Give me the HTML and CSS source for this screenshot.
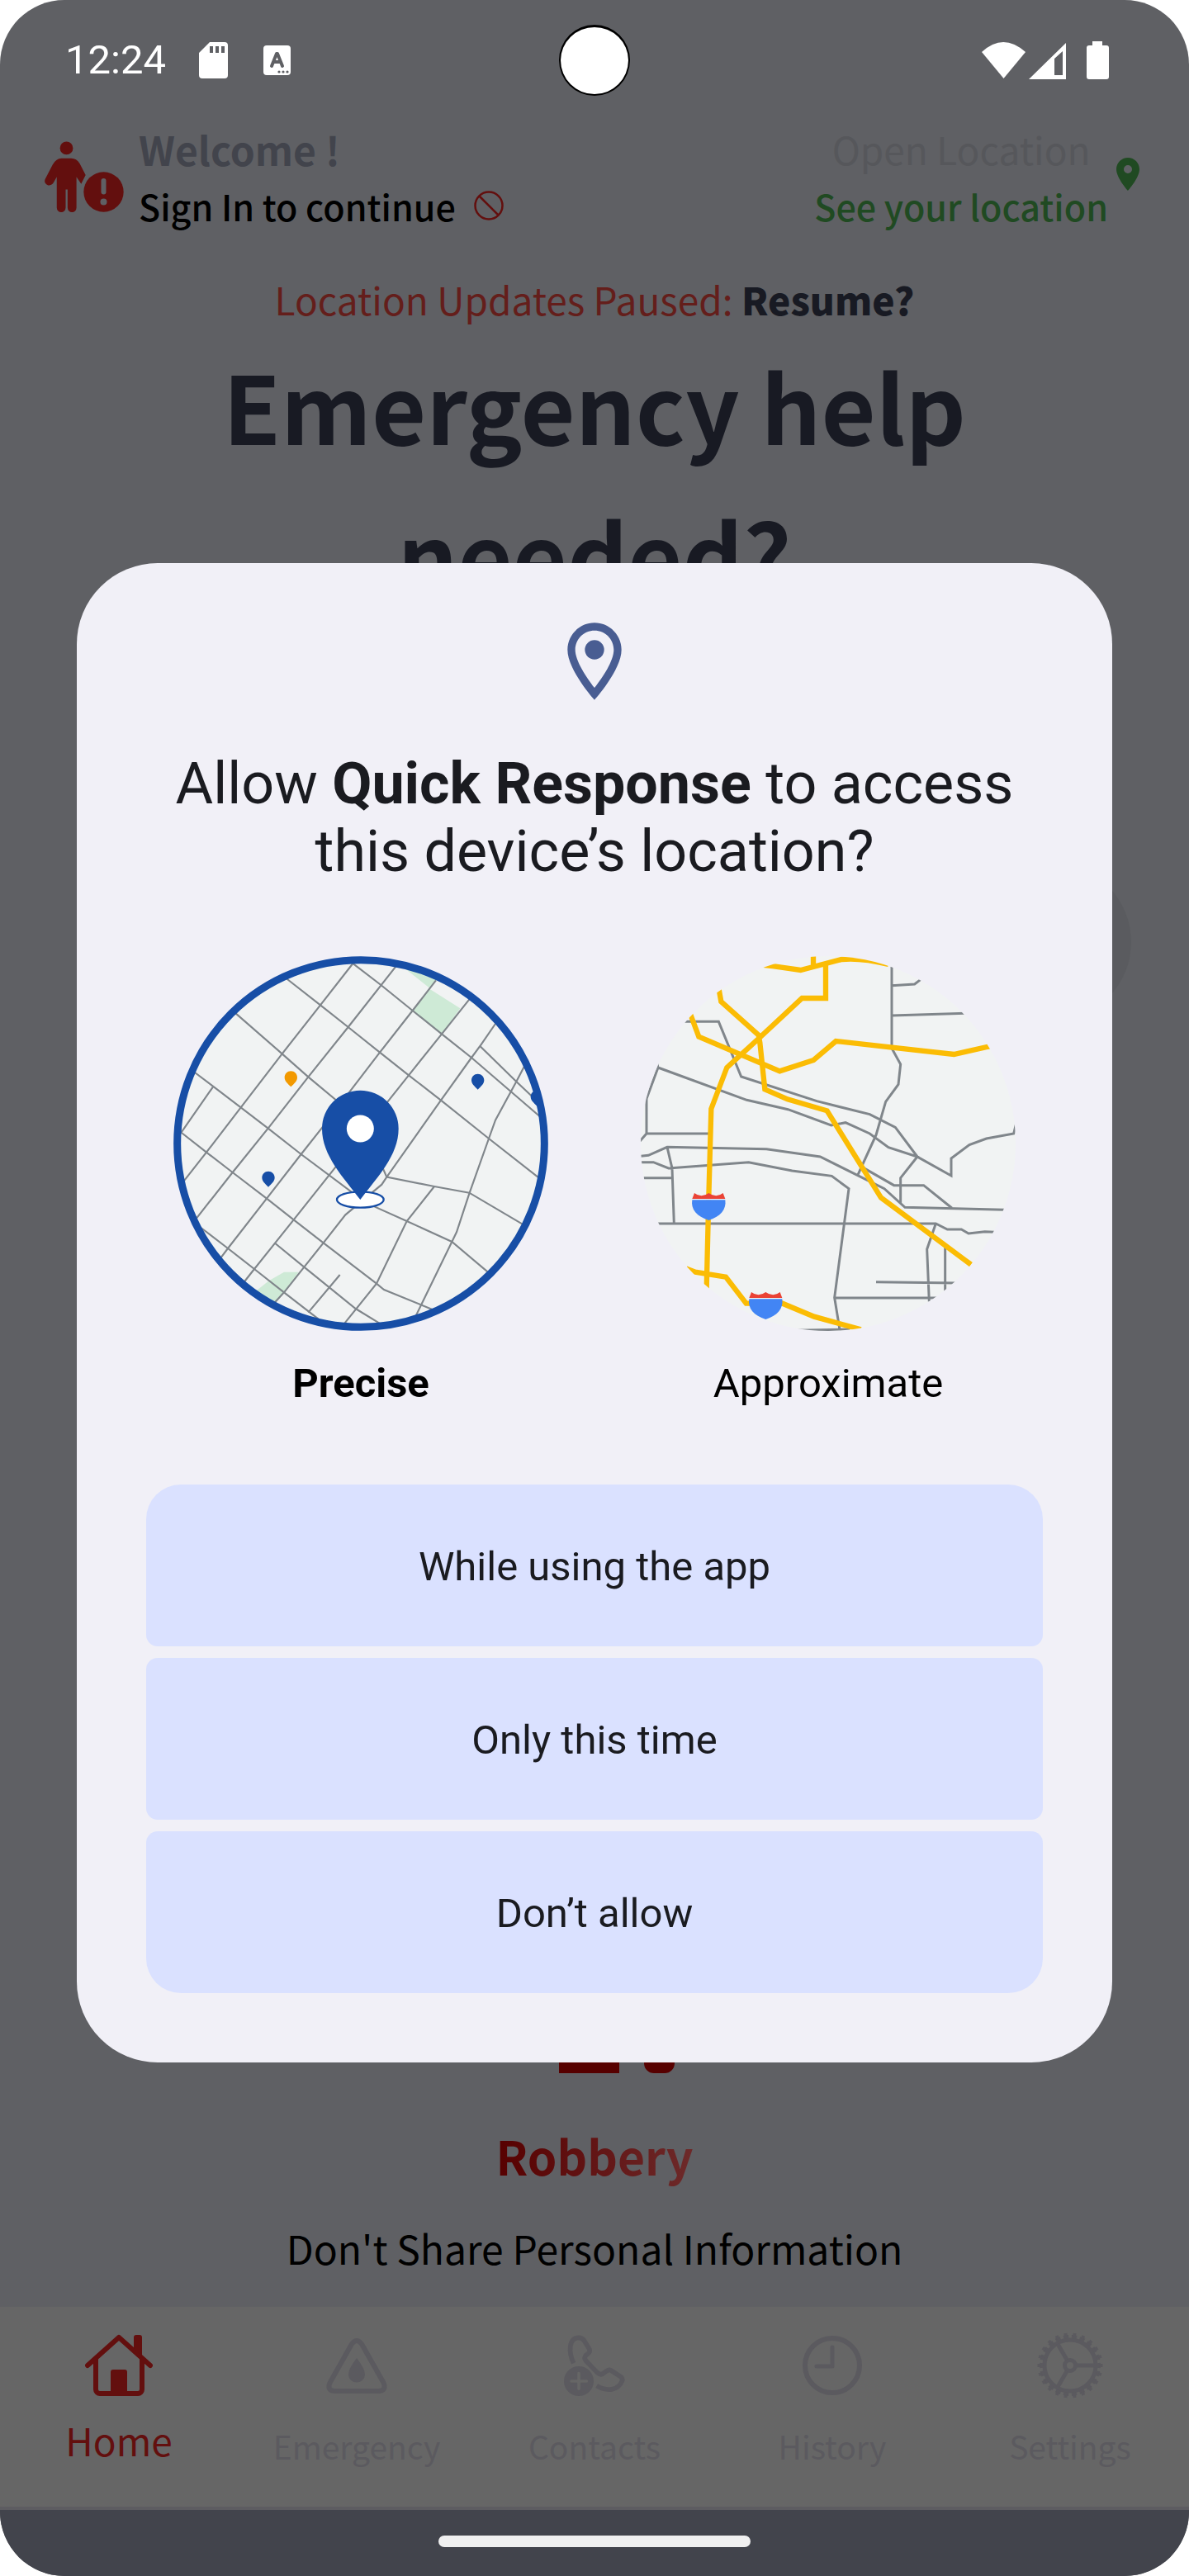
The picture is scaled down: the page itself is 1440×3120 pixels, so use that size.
FILE: index.html
```html
<!DOCTYPE html>
<html lang="en">
<head>
<meta charset="utf-8">
<meta name="viewport" content="width=device-width, initial-scale=1">
<title>Quick Response</title>
<link rel="stylesheet" href="styles.css">
</head>
<body>
<div class="screen">
  <div class="status-bar">
    <div class="status-left">
      <time class="clock">12:24</time>
      <svg class="sd-icon" viewBox="0 0 35 44" aria-hidden="true"><path fill="#fff" fill-rule="evenodd" d="M13 0H31a4 4 0 0 1 4 4V40a4 4 0 0 1-4 4H4a4 4 0 0 1-4-4V13ZM13 5V13H17V5ZM20 5V13H24V5ZM27 5V13H31V5Z"/></svg>
      <svg class="keyboard-icon" viewBox="0 0 33 36" aria-hidden="true"><rect width="33" height="36" rx="4" fill="#fff"/><path d="M10 25 16 10h1L23 25M12 20h9" fill="none" stroke="#5f6064" stroke-width="4" stroke-linecap="round" stroke-linejoin="round"/><g fill="#5f6064"><circle cx="19" cy="32" r="1.6"/><circle cx="24" cy="32" r="1.6"/><circle cx="29" cy="32" r="1.6"/></g></svg>
    </div>
    <div class="camera"></div>
    <svg class="status-icons" viewBox="0 0 154 46" aria-hidden="true"><g fill="#fff"><path d="M0 13Q26-11 53 13L26.500 45Z"/><path fill-rule="evenodd" d="M102 2V46H57ZM88 21V41H98V12Z"/><path d="M134 0h12v5h5a3 3 0 0 1 3 3V43a3 3 0 0 1-3 3H130a3 3 0 0 1-3-3V8a3 3 0 0 1 3-3h4Z"/></g></svg>
  </div>

  <header class="app-header">
    <div class="account">
      <svg class="person-icon" viewBox="42 36 286 256" aria-hidden="true"><g fill="#630f0e"><circle cx="121" cy="61" r="23.500"/><path d="M103 98H138Q157 98 169 117L190 158 174 190 157 165V276a16 16 0 0 1-32 0V210H118V276a16 16 0 0 1-32 0V165L75 184Q68 196 55 195 38 189 44 173L71 121Q84 98 103 98Z"/><circle cx="255" cy="219" r="72"/></g><path d="M255 179V219" stroke="#5f6064" stroke-width="18" stroke-linecap="round"/><circle cx="255" cy="255" r="12" fill="#5f6064"/></svg>
      <div>
        <p class="welcome">Welcome !</p>
        <a class="sign-in" href="#sign-in">Sign In to continue
          <svg class="ban-icon" viewBox="0 0 36 36" aria-hidden="true"><g fill="none" stroke="#630f0e" stroke-width="2.500"><circle cx="18" cy="18" r="16.500"/><path d="M6 6 30 30"/></g></svg>
        </a>
      </div>
    </div>
    <a class="location-link" href="#location">
      <span class="location-text"><span class="location-hint">Open Location</span><span class="location-action">See your location</span></span>
      <svg class="pin-icon" viewBox="5 2 14 20" aria-hidden="true"><path fill="#204a22" d="M12 2C8.130 2 5 5.130 5 9c0 5.250 7 13 7 13s7-7.750 7-13c0-3.870-3.130-7-7-7zm0 9.500a2.500 2.500 0 1 1 0-5 2.500 2.500 0 0 1 0 5z"/></svg>
    </a>
  </header>

  <main class="home">
    <p class="paused">Location Updates Paused: <a class="resume" href="#resume">Resume?</a></p>
    <h1 class="headline">Emergency help needed?</h1>
    <div class="bubble"></div>
    <section class="tip">
      <svg class="tip-icon" viewBox="0 0 140 100" aria-hidden="true"><path fill="#570000" d="M0 0H73V100H0ZM103 0H140V88a12 12 0 0 1-12 12H115a12 12 0 0 1-12-12Z"/></svg>
      <h2 class="tip-title">Robbery</h2>
      <p class="tip-text">Don't Share Personal Information</p>
    </section>
  </main>

  <nav class="tabs">
    <a class="tab tab-active" href="#home">
      <svg class="tab-icon" viewBox="0 0 82 80" aria-hidden="true"><g fill="none" stroke="#630f0e" stroke-width="6" stroke-linecap="round" stroke-linejoin="round"><path d="M3 40 41 6 79 40"/><path d="M13 33V69a5 5 0 0 0 5 5H64a5 5 0 0 0 5-5V33"/></g><path fill="#630f0e" d="M31 74V48a3 3 0 0 1 3-3H48a3 3 0 0 1 3 3V74ZM59 19V6a3 3 0 0 1 3-3h4a3 3 0 0 1 3 3V28Z"/></svg>
      Home
    </a>
    <a class="tab" href="#emergency">
      <svg class="tab-icon" viewBox="0 0 80 80" aria-hidden="true"><path d="M34 14Q40 6 46 14L72 60Q77 70 67 71H13Q3 70 8 60Z" fill="none" stroke="#5b5a5f" stroke-width="6" stroke-linejoin="round"/><path fill="#5b5a5f" d="M40 31Q50 44 50 51a10 9.500 0 0 1-20 0Q30 44 40 31Z"/></svg>
      Emergency
    </a>
    <a class="tab" href="#contacts">
      <svg class="tab-icon" viewBox="60 46 240 240" aria-hidden="true"><g fill="none" stroke="#5b5a5f" stroke-width="17" stroke-linejoin="round"><path d="M104 158C85 118 86 66 122 65Q137 65 144 78L161 106Q165 113 160 120L148 130Q141 138 148 148L190 192Q204 204 214 193L224 186Q232 180 240 184L274 206Q284 214 280 223C266 257 225 262 188 240"/></g><circle cx="123" cy="223" r="54" fill="#5b5a5f"/><path d="M123 195V251M96 223H151" stroke="#666" stroke-width="11" stroke-linecap="round"/></svg>
      Contacts
    </a>
    <a class="tab" href="#history">
      <svg class="tab-icon" viewBox="0 0 80 80" aria-hidden="true"><g fill="none" stroke="#5b5a5f" stroke-linecap="round" stroke-linejoin="round"><circle cx="40" cy="40" r="33" stroke-width="6"/><path d="M40 18V41H21" stroke-width="5"/></g></svg>
      History
    </a>
    <a class="tab" href="#settings">
      <svg class="tab-icon" viewBox="0 0 80 80" aria-hidden="true"><g fill="none" stroke="#5b5a5f"><circle cx="40" cy="40" r="31" stroke-width="5"/><circle cx="40" cy="40" r="35" stroke-width="4" pathLength="22" stroke-dasharray=".62 .38" stroke-dashoffset=".31"/><circle cx="40" cy="40" r="37.500" stroke-width="4" pathLength="22" stroke-dasharray=".36 .64" stroke-dashoffset=".18"/><circle cx="40" cy="40" r="6.500" stroke-width="5"/><path d="M48 40H70M36 33 25 14M36 47 25 66" stroke-width="5"/></g></svg>
      Settings
    </a>
  </nav>
  <div class="gesture-bar"><div class="gesture-handle"></div></div>

  <div class="overlay">
    <section class="dialog" role="dialog" aria-modal="true" aria-labelledby="dialog-title">
      <svg class="dialog-icon" viewBox="0 0 24 24" aria-hidden="true"><path fill="#495d92" d="M12 2C8.130 2 5 5.130 5 9c0 5.250 7 13 7 13s7-7.750 7-13c0-3.870-3.130-7-7-7zM7 9c0-2.760 2.240-5 5-5s5 2.240 5 5c0 2.880-2.880 7.190-5 9.880C9.920 16.210 7 11.850 7 9z"/><circle cx="12" cy="9" r="2.500" fill="#495d92"/></svg>
      <h2 class="dialog-title" id="dialog-title">Allow <b>Quick Response</b> to access this device’s location?</h2>
      <div class="accuracy">
        <label class="accuracy-option">
          <input class="accuracy-input" type="radio" name="accuracy" value="precise" checked>
          <svg class="map" viewBox="58 55 1362 1362" aria-hidden="true">
            <defs><clipPath id="disc-a"><circle cx="739" cy="736" r="675"/></clipPath></defs>
            <g clip-path="url(#disc-a)">
              <rect x="58" y="55" width="1362" height="1362" fill="#f1f3f3"/>
              <path fill="#ceead6" d="M880 85 990 172 1020 132 900 60ZM990 175 1100 245 1033 338 927 253ZM350 1278 405 1235 460 1203H513L427 1320Z"/>
              <g fill="none" stroke="#80868b" stroke-width="6.500">
                <path d="M710 82 592 233 453 410 303 605 178 768 98 870M866 93 693 313 548 494 402 681 273 841 140 1010M1012 143 927 253 808 405 597 680 522 775 397 936 256 1117 228 1154M1135 210 1033 338 913 488 647 822 495 1013 352 1192 312 1243M1230 298 1172 382 1141 424 1030 579 833 858 815 885 683 995 603 1097 533 1185 460 1277 425 1315M1335 452 1304 511 1228 651 1204 718 1133 918 1087 1058 1070 1093 936 1368M202 530 85 698M1006 892 906 1018 796 1245 676 1394M663 1213 548 1350"/>
                <path d="M705 78 812 160 927 253 1033 338 1141 424 1392 640M468 136 592 233 693 313 808 405 913 488 1030 579 1204 718 1390 864M281 260 453 410 548 494 680 604M132 475 303 605 402 681 522 775 705 912 790 966 906 1018 1070 1093 1204 1206M84 694 178 768 273 841 397 936 495 1013 603 1097 796 1245 823 1267 1006 1342M154 1039 256 1117 352 1192 460 1277 585 1374M428 1099 533 1185 720 1336 810 1391M1172 382 1304 511 1370 573M810 805 833 858 1006 892 1133 915 1330 1031"/>
              </g>
              <g fill="#174ea6"><path id="drop" d="M1164 483c-13 0-23 10-23 23 0 14 12 23 23 34 11-11 23-20 23-34 0-13-10-23-23-23Z"/><use href="#drop" x="-761" y="354"/><use href="#drop" x="215" y="60"/></g>
              <path fill="#f29900" d="M485 473c-13 0-23 10-23 23 0 14 12 23 23 34 11-11 23-20 23-34 0-13-10-23-23-23Z"/>
            </g>
            <circle cx="739" cy="736" r="667" fill="none" stroke="#174ea6" stroke-width="27"/>
            <ellipse cx="737" cy="940" rx="85" ry="29" fill="#fff" stroke="#174ea6" stroke-width="7"/>
            <path fill="#174ea6" d="M737 940C675 858 598 780 598 682a139 139 0 0 1 278 0C876 780 799 858 737 940Z"/>
            <circle cx="737" cy="682" r="49.500" fill="#fff"/>
          </svg>
          <span class="accuracy-name accuracy-name-selected">Precise</span>
        </label>
        <label class="accuracy-option">
          <input class="accuracy-input" type="radio" name="accuracy" value="approximate">
          <svg class="map" viewBox="50 55 1362 1362" aria-hidden="true">
            <defs><clipPath id="disc-b"><circle cx="731" cy="736" r="681"/></clipPath></defs>
            <g clip-path="url(#disc-b)">
              <rect x="50" y="55" width="1362" height="1362" fill="#f1f3f3"/>
              <path fill="none" stroke="#80868b" stroke-width="9" d="M962 93V390L994 448 986 521 940 584 905 705 838 852M962 162 1045 157 1070 138M962 271 1230 263M205 293H333L415 493 690 582 882 630 975 677 1055 784 1178 853V790L1244 741 1306 718 1405 700 1415 660M108 440 113 460 435 578 585 612 742 670 794 660 882 700 950 750 1055 784 994 861V955M113 460 71 573V700H300M71 700 45 730M50 782 78 779 146 749 507 756 702 784 935 900 1010 968 1370 977M50 804H96L151 826 442 804 600 835 744 854 806 900 754 1296 773 1412M146 749 164 826 171 1027M60 861H164M112 1027H1122L1164 1048H1215L1241 1063 1300 1056 1335 1058M860 825 970 888H1078L1180 970M1122 1027 1090 1120 1098 1310M1156 1115V1275M905 1239 1200 1243M754 1297H1130M620 1415 810 1411"/>
              <path fill="none" stroke="#fbbc04" stroke-width="19" d="M490 87 535 92 631 106 780 67Q850 60 950 85M677 50V95M722 88V208H636L478 355 363 460 306 610 297 930 289 1265M333 170 342 220 478 342 483 370 501 539 583 575 727 617 923 933 1250 1176M230 265 261 348 555 473 678 433 759 364 1188 412 1325 381M215 1190 248 1203 359 1221 433 1317H450M560 1315 680 1365 850 1412"/>
              <g id="shield"><path fill="#f1f3f3" d="M237 936H357V942H237Z"/><path fill="#ea4335" d="M245 916Q270 936 297 916 324 936 349 916L357 937H237Z"/><path fill="#4285f4" d="M237 941H357C362 975 340 1002 297 1015 254 1002 231 975 237 941Z"/></g>
              <use href="#shield" x="207" y="360"/>
            </g>
          </svg>
          <span class="accuracy-name">Approximate</span>
        </label>
      </div>
      <div class="actions">
        <button class="action" type="button">While using the app</button>
        <button class="action" type="button">Only this time</button>
        <button class="action" type="button">Don’t allow</button>
      </div>
    </section>
  </div>
</div>
</body>
</html>
```
FILE: styles.css
```css
* {
  box-sizing: border-box;
}

body {
  margin: 0;
  background: #fff;
  font-family: "Noto Sans CJK SC", "Noto Sans", sans-serif;
}

p,
h1,
h2 {
  margin: 0;
}

a {
  color: inherit;
  text-decoration: none;
}

svg {
  display: block;
  flex: none;
}

.screen {
  position: relative;
  display: flex;
  flex-direction: column;
  min-height: 100vh;
  overflow: hidden;
  border-radius: 78px;
  background: #5f6064;
}

/* Status bar */
.status-bar {
  display: grid;
  grid-template-columns: 1fr auto 1fr;
  align-items: center;
  height: 142px;
  padding: 4px 97px 0 79px;
}

.status-left {
  display: flex;
  align-items: center;
}

.clock {
  margin-right: 40px;
  color: #fff;
  font: 49px/60px Roboto, sans-serif;
}

.sd-icon {
  width: 35px;
  height: 44px;
  margin-right: 43px;
}

.keyboard-icon {
  width: 33px;
  height: 36px;
}

.camera {
  width: 86px;
  height: 86px;
  margin-left: 18px;
  border: 2px solid #000;
  border-top-width: 3px;
  border-radius: 50%;
  background: #fff;
}

.status-icons {
  justify-self: end;
  width: 154px;
  height: 46px;
}

/* Header */
.app-header {
  display: flex;
  justify-content: space-between;
  padding: 0 60px 0 54px;
}

.account {
  display: flex;
  align-items: center;
  gap: 18px;
}

.person-icon {
  width: 96px;
  height: 86px;
  margin-top: 6px;
}

.welcome {
  color: #42444c;
  font-size: 48px;
  font-weight: 700;
  line-height: 76px;
}

.sign-in {
  display: flex;
  align-items: center;
  gap: 22px;
  color: #000;
  font-size: 43px;
  font-weight: 500;
  line-height: 62px;
}

.ban-icon {
  width: 36px;
  height: 36px;
}

.location-link {
  display: flex;
  align-items: center;
  gap: 10px;
}

.location-text {
  display: flex;
  flex-direction: column;
  text-align: center;
}

.location-hint {
  color: #56575b;
  font-size: 46px;
  line-height: 76px;
}

.location-action {
  color: #204a22;
  font-size: 43px;
  font-weight: 500;
  line-height: 62px;
}

.pin-icon {
  width: 28px;
  height: 40px;
}

/* Home */
.home {
  display: flex;
  flex: 1;
  flex-direction: column;
  padding-top: 48px;
}

.paused {
  color: #641e1b;
  font-size: 46px;
  line-height: 68px;
  text-align: center;
}

.resume {
  color: #181a23;
  font-weight: 900;
}

.headline {
  margin-top: 4px;
  padding: 0 200px;
  color: #181a23;
  font-size: 114px;
  font-weight: 700;
  line-height: 180px;
  text-align: center;
}

.bubble {
  align-self: flex-end;
  width: 190px;
  height: 190px;
  margin: 286px 70px 0;
  border-radius: 50%;
  background: #5a5b5f;
}

.tip {
  display: flex;
  flex-direction: column;
  align-items: center;
  margin-top: auto;
  padding-bottom: 37px;
}

.tip-icon {
  width: 140px;
  height: 100px;
  margin-left: 54px;
}

.tip-title {
  margin: 57px 0 35px;
  background: linear-gradient(90deg, #570000, #6d2a2a);
  background-clip: text;
  color: transparent;
  font-size: 57px;
  font-weight: 700;
  line-height: 84px;
}

.tip-text {
  color: #000;
  font-size: 48px;
  line-height: 70px;
}

/* Tabs */
.tabs {
  display: grid;
  grid-template-columns: repeat(5, 1fr);
  height: 246px;
  padding-top: 31px;
  border-bottom: 4px solid #5d5c61;
  background: #666;
}

.tab {
  display: flex;
  flex-direction: column;
  align-items: center;
  gap: 27px;
  color: #5b5a5f;
  font-size: 39px;
  line-height: 60px;
}

.tab-active {
  gap: 20px;
  color: #630f0e;
  font-size: 46px;
}

.tab-icon {
  width: 82px;
  height: 80px;
}

.gesture-bar {
  display: flex;
  justify-content: center;
  height: 80px;
  padding-top: 31px;
  background: #42444c;
}

.gesture-handle {
  width: 378px;
  height: 14px;
  border-radius: 7px;
  background: #f0f0f0;
}

/* Permission dialog */
.overlay {
  position: absolute;
  inset: 0;
  display: flex;
  align-items: center;
  padding: 60px 93px 0;
}

.dialog {
  display: flex;
  flex: 1;
  flex-direction: column;
  align-items: center;
  padding: 63px 84px 84px;
  border-radius: 98px;
  background: #f1f0f7;
  font-family: Roboto, sans-serif;
}

.dialog-icon {
  width: 112px;
  height: 112px;
}

.dialog-title {
  margin: 51px 0 86px;
  color: #1a1b20;
  font-size: 70px;
  font-weight: 400;
  line-height: 82px;
  text-align: center;
}

.accuracy {
  display: flex;
  justify-content: center;
  gap: 112px;
}

.accuracy-option {
  display: flex;
  flex-direction: column;
  align-items: center;
  gap: 35px;
}

.accuracy-input {
  position: absolute;
  margin: 0;
  appearance: none;
}

.map {
  width: 454px;
  height: 454px;
}

.accuracy-name {
  color: #000;
  font-size: 49px;
  line-height: 58px;
}

.accuracy-name-selected {
  font-weight: 700;
}

.actions {
  display: flex;
  flex-direction: column;
  align-self: stretch;
  gap: 14px;
  margin-top: 93px;
}

.action {
  height: 196px;
  padding: 4px 0 0;
  border: 0;
  border-radius: 14px;
  background: #dae1ff;
  color: #1a1b20;
  font: 49px/58px Roboto, sans-serif;
}

.action:first-child {
  border-radius: 42px 42px 14px 14px;
}

.action:last-child {
  border-radius: 14px 14px 42px 42px;
}
```
